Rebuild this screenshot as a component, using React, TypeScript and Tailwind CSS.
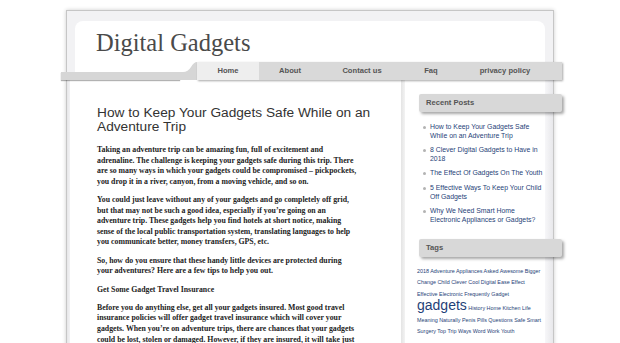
import React from "react";

const paragraphs: string[][] = [
  [
    "Taking an adventure trip can be amazing fun, full of excitement and",
    "adrenaline. The challenge is keeping your gadgets safe during this trip. There",
    "are so many ways in which your gadgets could be compromised \u2013 pickpockets,",
    "you drop it in a river, canyon, from a moving vehicle, and so on.",
  ],
  [
    "You could just leave without any of your gadgets and go completely off grid,",
    "but that may not be such a good idea, especially if you\u2019re going on an",
    "adventure trip. These gadgets help you find hotels at short notice, making",
    "sense of the local public transportation system, translating languages to help",
    "you communicate better, money transfers, GPS, etc.",
  ],
  [
    "So, how do you ensure that these handy little devices are protected during",
    "your adventures? Here are a few tips to help you out.",
  ],
  ["Get Some Gadget Travel Insurance"],
  [
    "Before you do anything else, get all your gadgets insured. Most good travel",
    "insurance policies will offer gadget travel insurance which will cover your",
    "gadgets. When you\u2019re on adventure trips, there are chances that your gadgets",
    "could be lost, stolen or damaged. However, if they are insured, it will take just",
  ],
];

const posts = [
  "How to Keep Your Gadgets Safe While on an Adventure Trip",
  "8 Clever Digital Gadgets to Have in 2018",
  "The Effect Of Gadgets On The Youth",
  "5 Effective Ways To Keep Your Child Off Gadgets",
  "Why We Need Smart Home Electronic Appliances or Gadgets?",
];

const tags = [
  "2018", "Adventure", "Appliances", "Asked", "Awesome", "Bigger",
  "Change", "Child", "Clever", "Cool", "Digital", "Ease", "Effect",
  "Effective", "Electronic", "Frequently", "Gadget",
  "gadgets", "History", "Home", "Kitchen", "Life",
  "Meaning", "Naturally", "Penis", "Pills", "Questions", "Safe", "Smart",
  "Surgery", "Top", "Trip", "Ways", "Word", "Work", "Youth",
];

const navItems: { label: string; w: string; active?: boolean }[] = [
  { label: "Home", w: "w-[62px]", active: true },
  { label: "About", w: "w-[62px]" },
  { label: "Contact us", w: "w-[82px]" },
  { label: "Faq", w: "w-[56px]" },
  { label: "privacy policy", w: "w-[92px]" },
];

function SideHeading({ children }: { children: React.ReactNode }) {
  return (
    <div className="ml-[14px] w-[143px] h-[18px] flex items-center pl-[7px] bg-[#d8d8d8] rounded-[2px] shadow-[2px_2px_3px_rgba(0,0,0,0.35)] text-[7.6px] font-bold text-[#555] relative z-10">
      {children}
    </div>
  );
}

export default function App() {
  return (
    <div className="min-h-screen bg-white pt-[10px] font-['Liberation_Sans',Arial,sans-serif] overflow-hidden">
      <div className="mx-auto w-[488px] border border-[#c6c6c6] bg-[#f2f2f4] shadow-[0_0_4px_rgba(0,0,0,0.2)]">
        {/* header */}
        <div className="pt-[10px] px-[8px]">
          <div className="h-[51px] bg-white rounded-t-[8px] pl-[21px] pt-[8px]">
            <div className="font-['Liberation_Serif',Georgia,serif] text-[24.5px] leading-[28px] text-[#4a4a4a]">
              Digital Gadgets
            </div>
          </div>
        </div>

        {/* nav */}
        <div className="relative z-10 -mt-[10px] -ml-[6px] -mr-[9px] h-[18px] flex">
          <div className="flex items-end w-[136px]">
            <div className="flex-1 h-[8px] bg-[#d6d6d6] shadow-[0_1px_1px_rgba(0,0,0,0.3)]" />
            <svg width="17" height="18" viewBox="0 0 17 18" className="block">
              <path d="M0 10 L3 10 Q8 10 11 5 Q14 0 17 0 L17 18 L0 18 Z" fill="#d6d6d6" />
            </svg>
          </div>
          <div className="flex-1 flex bg-[#d9d9d9] shadow-[1px_1px_2px_rgba(0,0,0,0.35)]">
            {navItems.map((n) => (
              <div
                key={n.label}
                className={`${n.w} h-full flex items-center justify-center text-[7.6px] font-bold text-[#555] ${
                  n.active ? "bg-[#eeeeee]" : ""
                }`}
              >
                {n.label}
              </div>
            ))}
          </div>
        </div>

        {/* body */}
        <div className="flex pl-[3px] bg-[linear-gradient(to_right,#e6e6e8,#f2f2f4_3px)]">
          <div className="w-[331px] bg-white pl-[27px] pt-[26px] pb-[20px] text-[#222]">
            <h1 className="text-[13.7px] leading-[14px] text-[#333] font-normal mb-[11px] w-[280px]">
              How to Keep Your Gadgets Safe While on an Adventure Trip
            </h1>
            {paragraphs.map((p, i) => (
              <p
                key={i}
                className="font-['Liberation_Serif',serif] font-bold text-[7.8px] leading-[10.6px] mb-[7.7px]"
              >
                {p.map((l, j) => (
                  <span key={j} className="block whitespace-nowrap">
                    {l}
                  </span>
                ))}
              </p>
            ))}
          </div>
          <div className="w-[4px] bg-[linear-gradient(to_right,#e4e4e4,#f3f3f3)]" />
          <div className="w-[140px] bg-white pt-[14px] pb-[20px]">
            <SideHeading>Recent Posts</SideHeading>
            <ul className="mt-[11px] pl-[18px]">
              {posts.map((p) => (
                <li key={p} className="flex gap-[4px] mb-[5.8px]">
                  <span className="mt-[3px] w-[3px] h-[3px] rounded-full bg-[#b3b3b3] shrink-0" />
                  <span className="w-[115px] text-[6.9px] leading-[8.7px] text-[#1f3f78]">{p}</span>
                </li>
              ))}
            </ul>
            <div className="mt-[14px]">
              <SideHeading>Tags</SideHeading>
            </div>
            <div className="ml-[12px] w-[128px] mt-[9px] text-[5.4px] leading-[11.5px] text-[#1f3f78]">
              {tags.map((t, i) => (
                <React.Fragment key={t}>
                  {t === "gadgets" ? (
                    <span className="text-[14px]">{t}</span>
                  ) : (
                    <span>{t}</span>
                  )}
                  {i < tags.length - 1 ? " " : ""}
                </React.Fragment>
              ))}
            </div>
          </div>
          <div className="flex-1 bg-[linear-gradient(to_right,#f7f7f9,#e8e8eb)]" />
        </div>
      </div>
    </div>
  );
}
